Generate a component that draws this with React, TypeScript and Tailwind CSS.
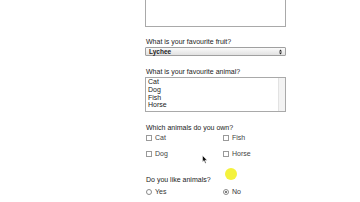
import React from 'react';

const font = { fontFamily: '"Liberation Sans", Arial, sans-serif' };

function Check({ label }: { label: string }) {
  return (
    <label className="flex items-center h-[8px] gap-[3px] text-[#444]">
      <span className="block w-[6px] h-[6px] border border-[#9a9a9a] bg-white" />
      <span>{label}</span>
    </label>
  );
}

function Radio({ label, checked }: { label: string; checked?: boolean }) {
  return (
    <label className="flex items-center h-[8px] gap-[3px] text-[#333]">
      <span className="flex items-center justify-center w-[6px] h-[6px] rounded-full border border-[#8a8a8a] bg-white">
        {checked && <span className="block w-[2px] h-[2px] rounded-full bg-[#555]" />}
      </span>
      <span>{label}</span>
    </label>
  );
}

export default function App() {
  return (
    <div className="relative w-[360px] h-[202px] overflow-hidden bg-white text-[7px] leading-[8px] text-[#1a1a1a]" style={font}>
      <div className="pl-[145px] w-[286px]">
        <div className="-mt-[13px] h-[40px] w-[141px] border border-[#a9a9a9] bg-white" />

        <div className="mt-[11px] pl-px">What is your favourite fruit?</div>
        <div className="mt-[1px] h-[9px] w-[141px] flex items-center justify-between px-[3px] border border-[#a0a0a0] rounded-[1px] bg-gradient-to-b from-[#fafafa] to-[#e2e2e2]">
          <span className="font-semibold text-[6.5px] text-[#222]">Lychee</span>
          <svg width="3" height="6" viewBox="0 0 3 6">
            <path d="M0 2.4 L1.5 0.6 L3 2.4 Z M0 3.6 L1.5 5.4 L3 3.6 Z" fill="#222" />
          </svg>
        </div>

        <div className="mt-[12px] pl-px">What is your favourite animal?</div>
        <div className="mt-[1px] h-[35px] w-[141px] flex border border-[#a9a9a9] bg-white">
          <div className="flex-1 pl-[2px] leading-[7.8px]">
            <div>Cat</div>
            <div>Dog</div>
            <div>Fish</div>
            <div>Horse</div>
          </div>
          <div className="w-[7px] bg-[#f3f3f3] border-l border-[#e2e2e2]" />
        </div>

        <div className="mt-[12px] pl-px">Which animals do you own?</div>
        <div className="mt-[2px] grid grid-cols-[77px_1fr] gap-y-[8px] pl-px">
          <Check label="Cat" />
          <Check label="Fish" />
          <Check label="Dog" />
          <Check label="Horse" />
        </div>

        <div className="mt-[18px] pl-px">Do you like animals?</div>
        <div className="mt-[4px] grid grid-cols-[77px_1fr] pl-px">
          <Radio label="Yes" />
          <Radio label="No" checked />
        </div>
      </div>

      <div className="absolute left-[225px] top-[168px] w-[12px] h-[12px] rounded-full bg-[#f4f23c] blur-[0.5px]" />
      <svg className="absolute left-[202px] top-[155px]" width="6" height="9" viewBox="0 0 6 9">
        <path d="M0.5 0.5 L0.5 7 L2 5.6 L3.2 8.3 L4.2 7.9 L3 5.2 L5.2 5.2 Z" fill="#111" stroke="#fff" strokeWidth="0.5" />
      </svg>
    </div>
  );
}
